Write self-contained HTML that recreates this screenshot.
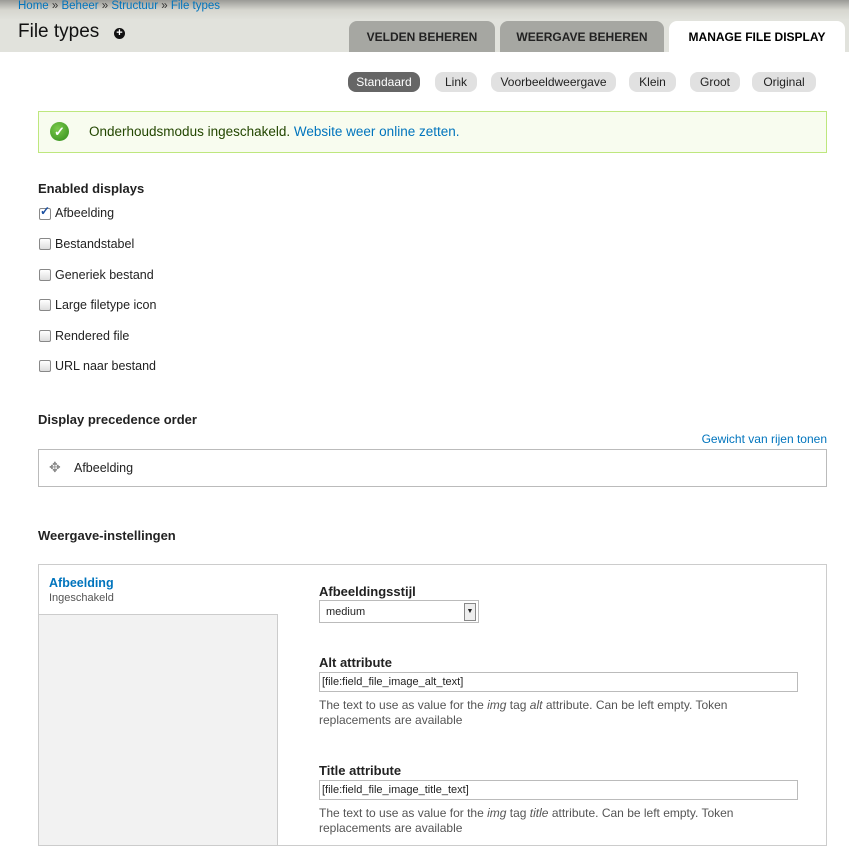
<!DOCTYPE html>
<html><head><meta charset="utf-8"><style>
body{margin:0;width:849px;height:836px;overflow:hidden;background:#fff;font-family:"Liberation Sans",sans-serif;font-size:13px;color:#333;position:relative}
a{color:#0074bd;text-decoration:none}
.abs{position:absolute}
#hdr{position:absolute;left:0;top:0;width:849px;height:52px;background:linear-gradient(#9a9a96 0px,#d6d6cf 10px,#e1e2dc 20px,#e1e2dc 52px)}
.tab{position:absolute;top:21px;height:31px;background:#a6a7a2;border-radius:8px 8px 0 0;font-weight:bold;font-size:12px;color:#222;text-align:center;line-height:33px}
.pill{position:absolute;top:72px;height:20px;border-radius:8px;background:#e1e1e1;font-size:12px;line-height:20px;text-align:center;color:#222}
.h{font-weight:bold;font-size:13px;color:#222}
.cb{position:absolute;left:39px;width:10px;height:10px;border:1px solid #888;border-radius:2px;background:linear-gradient(#fff,#ddd)}
.cl{position:absolute;left:55px;font-size:12.5px;color:#222}
.inp{position:absolute;left:319px;width:479px;height:20px;box-sizing:border-box;border:1px solid #bbb;font-size:11px;line-height:18px;padding-left:2px;color:#222}
.desc{position:absolute;left:319px;font-size:12px;color:#555;line-height:15px;width:470px}
</style></head><body>
<div id="hdr"></div>
<div class="abs" style="left:18px;top:0;font-size:11.5px;color:#0074bd">Home <span style="color:#333">»</span> Beheer <span style="color:#333">»</span> Structuur <span style="color:#333">»</span> File types</div>
<div class="abs" style="left:18px;top:21px;font-size:19px;color:#111">File types</div>
<div class="abs" style="left:114px;top:28px;width:11px;height:11px;border-radius:50%;background:#111;color:#fff;font-size:11px;line-height:11px;text-align:center;font-weight:bold">+</div>
<div class="tab" style="left:349px;width:146px">VELDEN BEHEREN</div>
<div class="tab" style="left:500px;width:164px">WEERGAVE BEHEREN</div>
<div class="tab" style="left:669px;width:176px;background:#fff;color:#000">MANAGE FILE DISPLAY</div>
<div class="pill" style="left:348px;width:72px;background:#666;color:#fff">Standaard</div>
<div class="pill" style="left:435px;width:42px">Link</div>
<div class="pill" style="left:491px;width:125px">Voorbeeldweergave</div>
<div class="pill" style="left:629px;width:47px">Klein</div>
<div class="pill" style="left:690px;width:50px">Groot</div>
<div class="pill" style="left:752px;width:64px">Original</div>
<div class="abs" style="left:38px;top:111px;width:787px;height:40px;border:1px solid #bee77e;background:#f8fcef"></div>
<div class="abs" style="left:50px;top:122px;width:19px;height:19px;border-radius:50%;background:radial-gradient(circle at 40% 35%,#7ccb4c,#2f8a1a);color:#fff;font-size:13px;line-height:19px;text-align:center;font-weight:bold">✓</div>
<div class="abs" style="left:89px;top:124px;font-size:13.5px;color:#234600">Onderhoudsmodus ingeschakeld. <a>Website weer online zetten.</a></div>
<div class="abs h" style="left:38px;top:181px">Enabled displays</div>
<div class="cb" style="top:208px;background:#fff"></div><div class="abs" style="left:40px;top:204px;font-size:12px;color:#1a4fa0;font-weight:bold">✓</div><div class="cl" style="top:206px">Afbeelding</div>
<div class="cb" style="top:238px"></div><div class="cl" style="top:237px">Bestandstabel</div>
<div class="cb" style="top:269px"></div><div class="cl" style="top:268px">Generiek bestand</div>
<div class="cb" style="top:299px"></div><div class="cl" style="top:298px">Large filetype icon</div>
<div class="cb" style="top:330px"></div><div class="cl" style="top:329px">Rendered file</div>
<div class="cb" style="top:360px"></div><div class="cl" style="top:359px">URL naar bestand</div>
<div class="abs h" style="left:38px;top:412px">Display precedence order</div>
<div class="abs" style="right:22px;top:432px;font-size:12px;color:#0074bd">Gewicht van rijen tonen</div>
<div class="abs" style="left:38px;top:449px;width:787px;height:36px;border:1px solid #bbb"></div>
<div class="abs" style="left:49px;top:459px;font-size:14px;color:#888">✥</div>
<div class="abs" style="left:74px;top:461px;font-size:12.5px;color:#222">Afbeelding</div>
<div class="abs h" style="left:38px;top:528px">Weergave-instellingen</div>
<div class="abs" style="left:38px;top:564px;width:787px;height:280px;border:1px solid #ccc"></div>
<div class="abs" style="left:39px;top:614px;width:238px;height:230px;background:#f2f2f2;border-top:1px solid #ccc;border-right:1px solid #ccc"></div>
<div class="abs" style="left:49px;top:576px;font-size:12.5px;font-weight:bold;color:#0074bd">Afbeelding</div>
<div class="abs" style="left:49px;top:592px;font-size:11px;color:#555">Ingeschakeld</div>
<div class="abs h" style="left:319px;top:584px">Afbeeldingsstijl</div>
<div class="abs" style="left:319px;top:600px;width:160px;height:23px;border:1px solid #bbb;font-size:11px;line-height:23px;padding-left:6px;box-sizing:border-box;color:#222">medium<span style="position:absolute;right:2px;top:2px;width:10px;height:16px;border:1px solid #888;font-size:7px;line-height:16px;text-align:center;background:#eee">▼</span></div>
<div class="abs h" style="left:319px;top:655px">Alt attribute</div>
<div class="inp" style="top:672px">[file:field_file_image_alt_text]</div>
<div class="desc" style="top:698px">The text to use as value for the <i>img</i> tag <i>alt</i> attribute. Can be left empty. Token replacements are available</div>
<div class="abs h" style="left:319px;top:763px">Title attribute</div>
<div class="inp" style="top:780px">[file:field_file_image_title_text]</div>
<div class="desc" style="top:806px">The text to use as value for the <i>img</i> tag <i>title</i> attribute. Can be left empty. Token replacements are available</div>
</body></html>
